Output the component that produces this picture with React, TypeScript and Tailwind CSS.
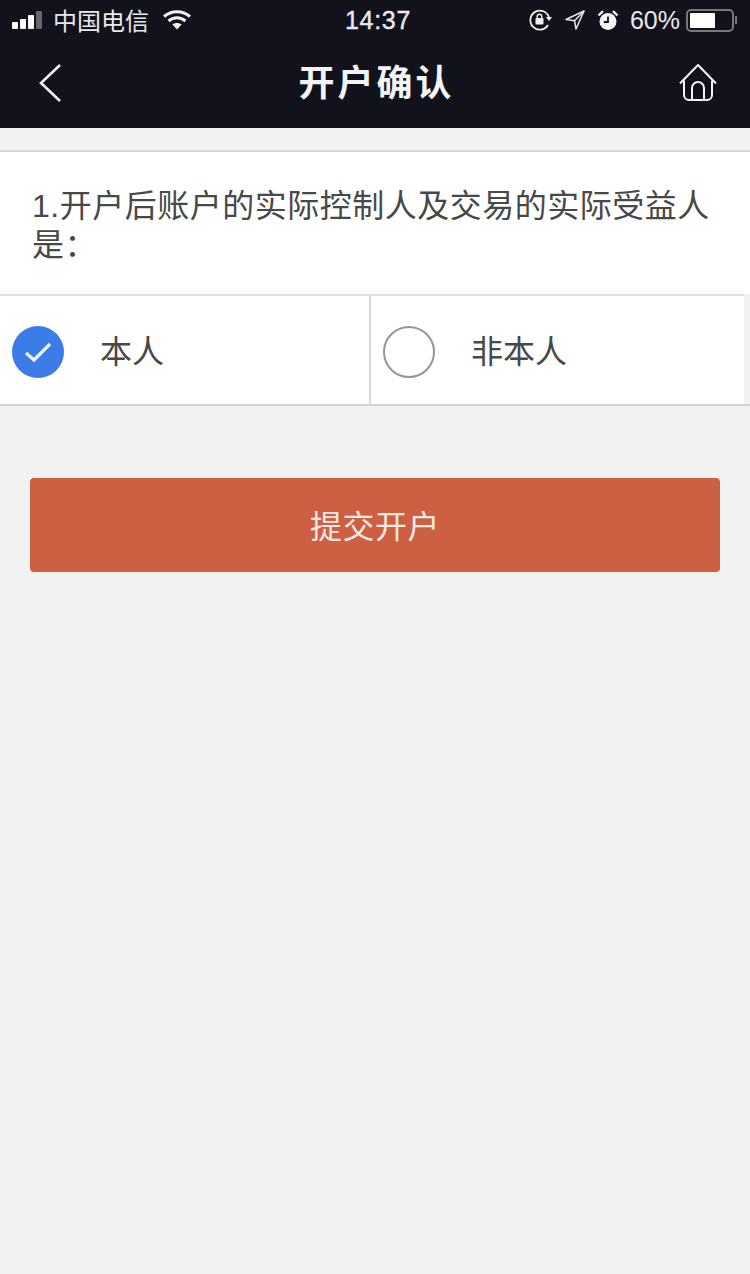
import React from 'react';

const font = '[font-family:"Liberation_Sans","Noto_Sans_CJK_SC",sans-serif]';

function StatusBar() {
  return (
    <div className="h-10 flex items-center justify-between pl-3 pr-[13px] text-[#e9e9ec]">
      <div className="flex items-center w-[190px]">
        {/* signal */}
        <div className="flex items-end gap-[2px] h-5 pb-px">
          <div className="w-[6px] h-[7px] rounded-[1px] bg-white" />
          <div className="w-[6px] h-[10px] rounded-[1px] bg-white" />
          <div className="w-[6px] h-[14px] rounded-[1px] bg-white" />
          <div className="w-[6px] h-[18px] rounded-[1px] bg-[#66666c]" />
        </div>
        <span className="ml-[11px] mt-[3px] text-[24px] leading-none">中国电信</span>
        <svg className="ml-[13px]" width="30" height="22" viewBox="0 0 30 22" fill="none" stroke="#f2f2f4" strokeWidth="3">
          <path d="M2 7.5C9.5 1 20.5 1 28 7.5" />
          <path d="M6.5 12C11.5 7.8 18.5 7.8 23.5 12" />
          <path d="M15 20.5l-4.6-5c2.7-2 6.500-2 9.200 0z" fill="#f2f2f4" stroke="none" />
        </svg>
      </div>
      <span className="text-[25px] leading-none tracking-[0.7px] ml-[26px] [-webkit-text-stroke:0.4px_#e9e9ec]">14:37</span>
      <div className="flex items-center">
        <svg width="26" height="24" viewBox="0 0 26 24" fill="none" stroke="#f0f0f2" strokeWidth="1.800">
          <path d="M20 17a9.500 9.500 0 1 1 1-7.500" />
          <path d="M18 9h6l-3 4z" fill="#f0f0f2" stroke="none" />
          <rect x="7.500" y="10" width="8" height="6.500" rx="1" fill="#f0f0f2" stroke="none" />
          <path d="M9.200 10V8.500a2.300 2.300 0 0 1 4.600 0V10" strokeWidth="1.400" />
        </svg>
        <svg className="ml-[10px]" width="22" height="22" viewBox="0 0 22 22" fill="none" stroke="#e6e6e9" strokeWidth="1.500">
          <path d="M20 2L2 10.500l8.500 1.200L12 20z" strokeLinejoin="round" />
          <path d="M20 2L10.500 11.700" />
        </svg>
        <svg className="ml-[11px]" width="22" height="22" viewBox="0 0 22 22">
          <circle cx="11" cy="12.500" r="8.500" fill="#f4f4f6" />
          <path d="M11 7.500v5.500H6.800" fill="none" stroke="#12121c" strokeWidth="1.800" />
          <path d="M1.500 6.500L6 2.200M20.500 6.500L16 2.200" stroke="#f4f4f6" strokeWidth="2.400" />
        </svg>
        <span className="ml-[11px] text-[25px] leading-none">60%</span>
        <div className="ml-[6px] w-[48px] h-[23px] rounded-[5px] border-2 border-[#77777c] p-[2px]">
          <div className="w-[25px] h-full rounded-[1px] bg-white" />
        </div>
        <div className="ml-px w-[2px] h-[8px] bg-[#77777c]" />
      </div>
    </div>
  );
}

function NavBar() {
  return (
    <div className="h-[88px] flex items-center justify-between pl-[38px] pr-[32px] pb-[2px]">
      <svg width="26" height="40" viewBox="0 0 26 40" fill="none" stroke="#f2f2f4" strokeWidth="2.600">
        <path d="M22 2L3 20l19 18" />
      </svg>
      <h1 className="text-[36px] leading-none font-bold text-[#f4f4f6] tracking-[3px] ml-[11px] mt-[2px]">开户确认</h1>
      <svg width="40" height="40" viewBox="0 0 40 40" fill="none" stroke="#f4f4f6" strokeWidth="2" strokeLinejoin="round">
        <path d="M2 20.500L20 2l18 18.500" />
        <path d="M6 17.500V32a5 5 0 0 0 5 5h18a5 5 0 0 0 5-5V17.500" />
        <path d="M14 37V25a6 6 0 0 1 12 0v12" />
      </svg>
    </div>
  );
}

export default function App() {
  return (
    <div className={`w-[750px] h-[1274px] bg-[#f2f2f2] overflow-hidden ${font}`}>
      <div className="bg-[#12121c]">
        <StatusBar />
        <NavBar />
      </div>

      <div className="mt-[22px] border-t-2 border-[#d9d9d9] bg-white h-[144px] pt-[35px] pl-[32px] pr-[30px] text-[32px] leading-[39px] text-[#484848] tracking-[0.5px]">
        1.开户后账户的实际控制人及交易的实际受益人是：
      </div>

      {/* options */}
      <div className="flex h-[112px] border-b-2 border-[#d2d2d2]">
        <div className="w-[744px] flex border-t-2 border-[#e0e0e0] bg-white">
          <div className="w-[371px] flex items-center pl-3 border-r-2 border-[#d8d8d8]">
            <div className="mt-[4px] w-[52px] h-[52px] rounded-full bg-[#3b7ce8] flex items-center justify-center">
              <svg width="28" height="22" viewBox="0 0 28 22" fill="none" stroke="#eef4ff" strokeWidth="3.200">
                <path d="M2 12l8 7L26 3" />
              </svg>
            </div>
            <span className="ml-[36px] mt-[4px] text-[32px] leading-none text-[#484848]">本人</span>
          </div>
          <div className="flex-1 flex items-center pl-3">
            <div className="mt-[4px] w-[52px] h-[52px] rounded-full border-2 border-[#969696]" />
            <span className="ml-[36px] mt-[4px] text-[32px] leading-none text-[#484848]">非本人</span>
          </div>
        </div>
      </div>

      <button className="block mt-[72px] ml-[30px] w-[690px] h-[94px] pt-[4px] rounded-[4px] bg-[#cd6042] text-[32px] tracking-[0.5px] text-[#f6e9e4]">
        提交开户
      </button>
    </div>
  );
}
